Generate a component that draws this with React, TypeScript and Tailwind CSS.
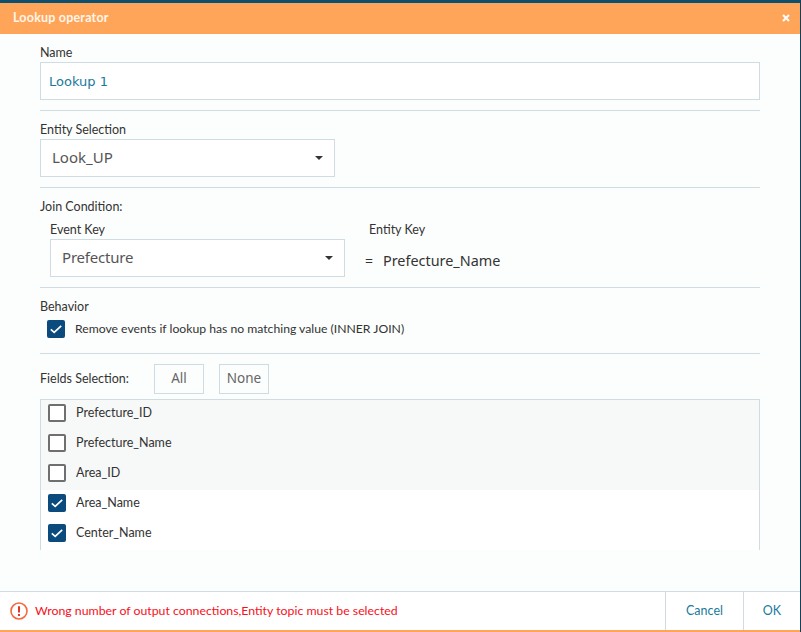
import React from "react";

function Caret() {
  return <span className="w-0 h-0 border-x-[4px] border-x-transparent border-t-[4px] border-t-[#333]" />;
}

function Check({ on }: { on: boolean }) {
  return on ? (
    <span className="w-[18px] h-[18px] rounded-[2px] bg-[#0b4a7c] flex items-center justify-center shrink-0">
      <svg width="12" height="10" viewBox="0 0 12 10" fill="none">
        <path d="M0.8 5.4 4.2 8.4 11.2 1.8" stroke="#fff" strokeWidth="1.7" />
      </svg>
    </span>
  ) : (
    <span className="block w-[18px] h-[18px] rounded-[2px] border-2 border-[#6f6f6f] bg-white shrink-0" />
  );
}

function Select({ text, cls }: { text: string; cls: string }) {
  return (
    <div className={"h-[38px] w-[295px] border border-[#cfdde3] bg-white flex items-center justify-between pl-[11px] pr-[11px] pb-[1px] text-[15px] text-[#555] font-['Noto_Sans',sans-serif] " + cls}>
      <span>{text}</span>
      <Caret />
    </div>
  );
}

const fields: [string, boolean][] = [
  ["Prefecture_ID", false],
  ["Prefecture_Name", false],
  ["Area_ID", false],
  ["Area_Name", true],
  ["Center_Name", true],
];

export default function App() {
  return (
    <div className="w-[801px] h-[632px] overflow-hidden bg-[#123f5a] font-['Lato',sans-serif] text-[12.5px] text-[#333]">
      <div className="w-[800px] h-[632px] flex flex-col">
        <div className="h-[3px] bg-[#0f4f6e] shrink-0" />
        <div className="h-[31px] shrink-0 bg-[#ffa559] flex items-center justify-between pl-[13px] pr-[10px] pb-[1px] text-[#fff5ea] font-bold text-[12.5px] tracking-[0.2px]">
          <span className="pt-[1px]">Lookup operator</span>
          <svg width="8" height="8" viewBox="0 0 8 8"><path d="M1 1 7 7M7 1 1 7" stroke="#fff" strokeWidth="2" /></svg>
        </div>

        <div className="flex-1 min-h-0 bg-[#fcfefd] px-[40px] flex flex-col">
          <div className="h-[28px] flex items-end leading-[18px]">Name</div>
          <div className="h-[38px] border border-[#cfdde3] bg-white flex items-center pl-[8px] pt-[2px] text-[#1a7a9c] font-['DejaVu_Sans',sans-serif] text-[13px] shrink-0">
            Lookup 1
          </div>
          <div className="mt-[10px] border-t border-[#cfdde3]" />
          <div className="h-[28px] flex items-end leading-[18px]">Entity Selection</div>
          <Select text="Look_UP" cls="" />
          <div className="mt-[10px] border-t border-[#cfdde3]" />
          <div className="h-[28px] flex items-end leading-[18px]">Join Condition:</div>
          <div className="flex pl-[10px]">
            <div className="w-[319px]">
              <div className="h-[23px] flex items-end leading-[18px]">Event Key</div>
              <Select text="Prefecture" cls="tracking-[-0.2px]" />
            </div>
            <div>
              <div className="h-[23px] flex items-end leading-[18px]">Entity Key</div>
              <div className="h-[38px] pt-[13px] flex items-start -ml-[4px] text-[14.4px] leading-[18px] font-['Noto_Sans',sans-serif]">
                <span className="w-[18px] text-[14px]">=</span>
                <span>Prefecture_Name</span>
              </div>
            </div>
          </div>
          <div className="mt-[10px] border-t border-[#cfdde3]" />
          <div className="h-[28px] flex items-end leading-[18px]">Behavior</div>
          <div className="h-[26px] flex items-center pl-[7px] gap-[10px]">
            <Check on />
            <span className="text-[12.2px] pt-[1px]">Remove events if lookup has no matching value (INNER JOIN)</span>
          </div>
          <div className="mt-[11px] border-t border-[#cfdde3]" />
          <div className="h-[45px] flex items-center gap-[23px] pt-[4px]">
            <span className="w-[91px] pt-[1px]">Fields Selection:</span>
            <div className="flex gap-[15px]">
              <span className="w-[50px] h-[30px] border border-[#cfdde3] flex items-center justify-center text-[13.5px] text-[#666] font-['Noto_Sans',sans-serif]">All</span>
              <span className="w-[50px] h-[30px] border border-[#cfdde3] flex items-center justify-center text-[13.5px] text-[#666] font-['Noto_Sans',sans-serif]">None</span>
            </div>
          </div>
          <div className="h-[151px] border border-b-0 border-[#cfdde3] overflow-hidden bg-white shrink-0">
            {fields.map(([name, on]) => (
              <div key={name} className={"h-[30px] flex pl-[7px] gap-[10px] " + (on ? "bg-white" : "bg-[#f7f8f8]")}>
                <span className="block pt-[4px] shrink-0"><Check on={on} /></span>
                <span className="leading-[26px]">{name}</span>
              </div>
            ))}
          </div>
        </div>

        <div className="h-[39px] shrink-0 bg-white border-t border-[#cfdde3] flex items-stretch">
          <div className="flex-1 flex items-center pl-[10px] gap-[7px] text-[#f7101a]">
            <svg width="18" height="18" viewBox="0 0 18 18" fill="none">
              <circle cx="9" cy="9" r="8" stroke="#f26a3c" strokeWidth="1.6" />
              <path d="M9 4.2V10.4" stroke="#e8352a" strokeWidth="2" />
              <path d="M9 12v2" stroke="#e8352a" strokeWidth="2" />
            </svg>
            <span className="text-[12.3px]">Wrong number of output connections,Entity topic must be selected</span>
          </div>
          <div className="w-[78px] border-l border-[#cfdde3] flex items-center justify-center text-[#1a7a9c]">Cancel</div>
          <div className="w-[57px] border-l border-[#cfdde3] flex items-center justify-center text-[#1a7a9c]">OK</div>
        </div>
        <div className="h-[2px] shrink-0 bg-[#ffa559]" />
      </div>
    </div>
  );
}
